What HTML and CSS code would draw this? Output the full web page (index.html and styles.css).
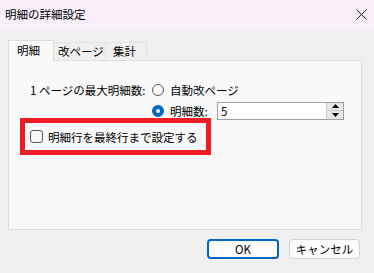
FILE: index.html
```html
<!DOCTYPE html>
<html lang="ja">
<head>
  <meta charset="UTF-8">
  <title>明細の詳細設定</title>
  <link rel="stylesheet" href="styles.css">
</head>
<body>
  <div class="window">
    <!-- タイトルバー -->
    <div class="titlebar">
      <span class="title">明細の詳細設定</span>
      <svg class="close" width="11" height="11" viewBox="0 0 11 11">
        <path d="M0.5 0.5 L10.5 10.5 M10.5 0.5 L0.5 10.5" stroke="#1a1a1a" stroke-width="1" fill="none"/>
      </svg>
    </div>

    <div class="main">
      <div class="tabs">
        <div class="tab active">明細</div>
        <div class="tab">改ページ</div>
        <div class="tab">集計</div>
      </div>

      <div class="panel">
        <div class="row">
          <span class="label">1 ページの最大明細数:</span>
          <span class="radio"></span>
          <span class="radio-text">自動改ページ</span>
        </div>
        <div class="row">
          <span class="label"></span>
          <span class="radio checked"></span>
          <span class="radio-text narrow">明細数:</span>
          <div class="spin">
            <span class="spin-value">5</span>
            <div class="spin-buttons">
              <div class="spin-btn"><svg width="7" height="4" viewBox="0 0 7 4"><path d="M0 4 L3.5 0 L7 4 Z" fill="#000"/></svg></div>
              <div class="spin-btn"><svg width="7" height="4" viewBox="0 0 7 4"><path d="M0 0 L7 0 L3.5 4 Z" fill="#000"/></svg></div>
            </div>
          </div>
        </div>
        <div class="highlight">
          <span class="checkbox"></span>
          <span class="check-text">明細行を最終行まで設定する</span>
        </div>
      </div>

      <div class="actions">
        <button class="btn primary">OK</button>
        <button class="btn">キャンセル</button>
      </div>
    </div>
  </div>
</body>
</html>
```

FILE: styles.css
```css
body {
  margin: 0;
  width: 374px;
  height: 273px;
  overflow: hidden;
  background: #f0f0f0;
  font-family: "Noto Sans CJK JP", "Noto Sans", sans-serif;
  font-size: 12px;
  color: #000;
}

.window {
  height: 273px;
}

/* タイトルバー */
.titlebar {
  height: 30px;
  background: #f9eff8;
  display: flex;
  align-items: center;
  justify-content: space-between;
  padding: 0 7px 2px 5px;
  box-sizing: border-box;
}

.title {
  font-size: 11.5px;
  line-height: 14px;
}

.main {
  padding: 10px 12px 0 8px;
}

/* タブ */
.tabs {
  display: flex;
  align-items: flex-end;
  height: 20px;
}

.tab {
  height: 18px;
  box-sizing: border-box;
  border: 1px solid #e3e3e3;
  border-bottom: none;
  background: #f0f0f0;
  line-height: 17px;
  padding: 0 0 0 4px;
  font-size: 11.5px;
  white-space: nowrap;
  overflow: hidden;
}

.tab + .tab {
  border-left: none;
}

.tab.active {
  position: relative;
  z-index: 1;
  height: 21px;
  margin-bottom: -1px;
  width: 46px;
  padding-left: 8px;
  background: #f9f9f9;
  border-color: #dcdcdc;
  line-height: 19px;
}

.tab:nth-child(2) {
  width: 52px;
}

.tab:nth-child(3) {
  width: 41px;
  padding-left: 7px;
}

/* パネル */
.panel {
  height: 170px;
  box-sizing: border-box;
  border: 1px solid #dcdcdc;
  background: #f9f9f9;
  padding-top: 18px;
}

.row {
  display: flex;
  align-items: center;
  height: 21px;
}

.label {
  width: 122px;
  padding-left: 21px;
  flex: none;
  font-size: 11.5px;
  white-space: nowrap;
}

.radio {
  width: 12px;
  height: 12px;
  box-sizing: border-box;
  border: 1px solid #5a5a5a;
  border-radius: 50%;
  background: #fdfdfd;
  flex: none;
}

.radio.checked {
  border: 4px solid #0067c0;
  background: #fff;
}

.radio-text {
  margin-left: 6px;
  font-size: 11.5px;
}

.radio-text.narrow {
  width: 42px;
}

/* スピンボックス */
.spin {
  margin-left: 5px;
  width: 127px;
  height: 18px;
  box-sizing: border-box;
  border: 1px solid #a0a0a0;
  background: #fff;
  display: flex;
  align-items: center;
  justify-content: space-between;
}

.spin-value {
  padding-left: 3px;
  font-size: 11.5px;
}

.spin-buttons {
  width: 16px;
  height: 16px;
  display: flex;
  flex-direction: column;
  border-left: 1px solid #c8c8c8;
  background: #e6e6e6;
}

.spin-btn {
  flex: 1;
  display: flex;
  align-items: center;
  justify-content: center;
}

.spin-btn + .spin-btn {
  border-top: 1px solid #c8c8c8;
}

/* 赤枠 */
.highlight {
  margin: -3px 0 0 11px;
  width: 191px;
  height: 37px;
  box-sizing: border-box;
  border: 5px solid #ee1c25;
  display: flex;
  align-items: center;
  padding-left: 5px;
}

.checkbox {
  width: 13px;
  height: 13px;
  box-sizing: border-box;
  border: 1px solid #5a5a5a;
  border-radius: 3px;
  background: #f7f7f7;
  flex: none;
}

.check-text {
  margin-left: 5px;
  font-size: 11.5px;
  white-space: nowrap;
}

/* ボタン */
.actions {
  display: flex;
  justify-content: flex-end;
  gap: 10px;
  margin-top: 9px;
  padding-right: 2px;
}

.btn {
  height: 20px;
  width: 71px;
  box-sizing: border-box;
  border: 1px solid #d0d0d0;
  border-radius: 4px;
  background: #fdfdfd;
  font-family: "Noto Sans CJK JP", "Noto Sans", sans-serif;
  font-size: 11.5px;
  line-height: 16px;
  padding: 0;
  color: #000;
}

.btn.primary {
  width: 72px;
  border: 2px solid #0067c0;
}
```
